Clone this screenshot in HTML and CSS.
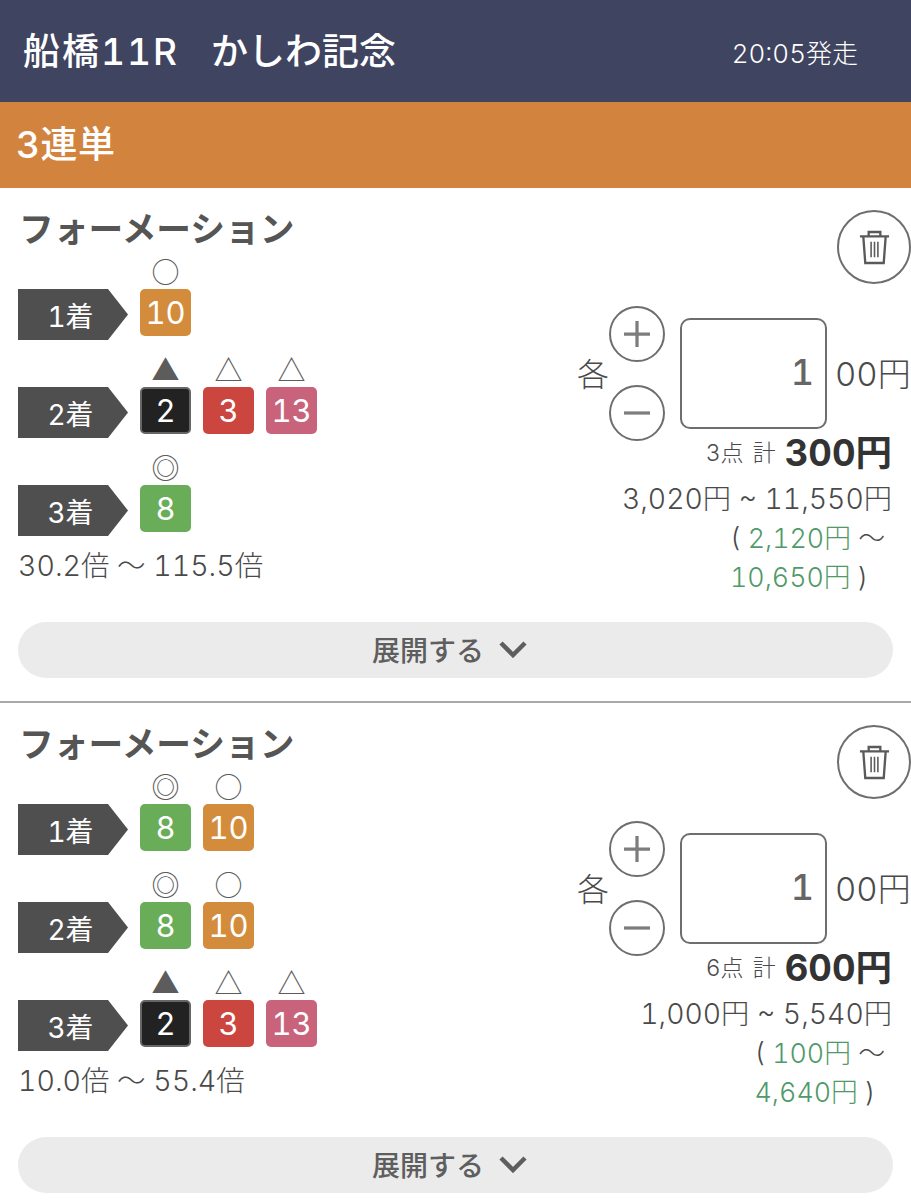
FILE: index.html
```html
<!DOCTYPE html>
<html lang="ja">
<head>
    <meta charset="UTF-8">
    <meta name="viewport" content="width=device-width, initial-scale=1.0">
    <title>船橋11R かしわ記念</title>
    <link rel="stylesheet" href="styles.css">
</head>
<body>
    <!-- Race header -->
    <header class="race-bar">
        <h1 class="race-name"><span class="race-no">船橋11R</span><span>かしわ記念</span></h1>
        <div class="race-time">20:05発走</div>
    </header>
    <div class="bet-type">3連単</div>

    <!-- First bet -->
    <section class="bet-card">
        <div class="bet-body">
            <div class="formation">
                <h2 class="formation-title">フォーメーション</h2>
                <div class="place-row">
                    <div class="place-label">1着</div>
                    <div class="pick"><span class="mark">○</span><span class="tile tile-orange">10</span></div>
                </div>
                <div class="place-row">
                    <div class="place-label">2着</div>
                    <div class="pick"><span class="mark">▲</span><span class="tile tile-black">2</span></div>
                    <div class="pick"><span class="mark">△</span><span class="tile tile-red">3</span></div>
                    <div class="pick"><span class="mark">△</span><span class="tile tile-pink">13</span></div>
                </div>
                <div class="place-row">
                    <div class="place-label">3着</div>
                    <div class="pick"><span class="mark">◎</span><span class="tile tile-green">8</span></div>
                </div>
                <p class="odds">30.2倍 ～ 115.5倍</p>
            </div>
            <div class="stake">
                <button class="trash-btn" type="button">
                    <svg viewBox="0 0 34 36" fill="none" stroke="currentColor" stroke-width="2.4">
                        <path d="M2 6.5h30M11 6V2h12v4M5.5 7l2 27h19l2-27"/>
                        <path d="M13.5 12v16M17 12v16M20.5 12v16" stroke-width="1.6"/>
                    </svg>
                </button>
                <div class="stepper">
                    <span class="each">各</span>
                    <div class="step-btns">
                        <button class="step-btn" type="button"><svg viewBox="0 0 56 56"><path d="M14 28h28M28 14v28"/></svg></button>
                        <button class="step-btn" type="button"><svg viewBox="0 0 56 56"><path d="M14 28h28"/></svg></button>
                    </div>
                    <input class="amount" type="text" value="1">
                    <span class="unit">00円</span>
                </div>
                <div class="total"><span class="total-label">3点 計</span> <strong>300円</strong></div>
                <div class="payout">3,020円 ~ 11,550円</div>
                <div class="profit">( <em>2,120円</em> ～<br><em>10,650円</em> )</div>
            </div>
        </div>
        <button class="expand-btn" type="button">展開する
            <svg viewBox="0 0 28 18" fill="none" stroke="currentColor" stroke-width="4.5"><path d="M2 3l12 12L26 3"/></svg>
        </button>
    </section>

    <!-- Second bet -->
    <section class="bet-card">
        <div class="bet-body">
            <div class="formation">
                <h2 class="formation-title">フォーメーション</h2>
                <div class="place-row">
                    <div class="place-label">1着</div>
                    <div class="pick"><span class="mark">◎</span><span class="tile tile-green">8</span></div>
                    <div class="pick"><span class="mark">○</span><span class="tile tile-orange">10</span></div>
                </div>
                <div class="place-row">
                    <div class="place-label">2着</div>
                    <div class="pick"><span class="mark">◎</span><span class="tile tile-green">8</span></div>
                    <div class="pick"><span class="mark">○</span><span class="tile tile-orange">10</span></div>
                </div>
                <div class="place-row">
                    <div class="place-label">3着</div>
                    <div class="pick"><span class="mark">▲</span><span class="tile tile-black">2</span></div>
                    <div class="pick"><span class="mark">△</span><span class="tile tile-red">3</span></div>
                    <div class="pick"><span class="mark">△</span><span class="tile tile-pink">13</span></div>
                </div>
                <p class="odds">10.0倍 ～ 55.4倍</p>
            </div>
            <div class="stake">
                <button class="trash-btn" type="button">
                    <svg viewBox="0 0 34 36" fill="none" stroke="currentColor" stroke-width="2.4">
                        <path d="M2 6.5h30M11 6V2h12v4M5.5 7l2 27h19l2-27"/>
                        <path d="M13.5 12v16M17 12v16M20.5 12v16" stroke-width="1.6"/>
                    </svg>
                </button>
                <div class="stepper">
                    <span class="each">各</span>
                    <div class="step-btns">
                        <button class="step-btn" type="button"><svg viewBox="0 0 56 56"><path d="M14 28h28M28 14v28"/></svg></button>
                        <button class="step-btn" type="button"><svg viewBox="0 0 56 56"><path d="M14 28h28"/></svg></button>
                    </div>
                    <input class="amount" type="text" value="1">
                    <span class="unit">00円</span>
                </div>
                <div class="total"><span class="total-label">6点 計</span> <strong>600円</strong></div>
                <div class="payout">1,000円 ~ 5,540円</div>
                <div class="profit">( <em>100円</em> ～<br><em>4,640円</em> )</div>
            </div>
        </div>
        <button class="expand-btn" type="button">展開する
            <svg viewBox="0 0 28 18" fill="none" stroke="currentColor" stroke-width="4.5"><path d="M2 3l12 12L26 3"/></svg>
        </button>
    </section>
</body>
</html>
```

FILE: styles.css
```css
:root {
    --navy: #3f4460;
    --orange: #d2843f;
    --text-color: #4a4a4a;
    --line-color: #6e6e6e;
    --green-text: #4f9a68;
}

* {
    margin: 0;
    padding: 0;
    box-sizing: border-box;
}

body {
    font-family: "Inter", "Noto Sans CJK JP", sans-serif;
    font-variant-numeric: tabular-nums;
    color: var(--text-color);
    background-color: #fff;
    overflow-x: hidden;
}

button {
    font-family: inherit;
    background: none;
    border: none;
    color: inherit;
}

.race-bar {
    height: 102px;
    display: flex;
    justify-content: space-between;
    align-items: center;
    padding: 0 53px 0 23px;
    background-color: var(--navy);
    color: #fff;
}

.race-name {
    display: flex;
    gap: 32px;
    font-size: 37px;
    font-weight: 500;
    line-height: 1;
}

.race-no {
    letter-spacing: 2px;
}

.race-time {
    font-size: 26px;
    font-weight: 300;
}

.bet-type {
    height: 86px;
    display: flex;
    align-items: center;
    padding: 0 0 6px 16px;
    background-color: var(--orange);
    color: #fff;
    font-size: 37px;
    font-weight: 500;
    letter-spacing: 0.5px;
}

.bet-card {
    height: 515px;
    padding-bottom: 23px;
    border-bottom: 2px solid #a9a9a9;
    display: flex;
    flex-direction: column;
}

.bet-body {
    flex-grow: 1;
    display: flex;
    justify-content: space-between;
}

.formation {
    padding: 21px 0 0 18px;
}

.formation-title {
    font-size: 34.7px;
    font-weight: 700;
    line-height: 40px;
    margin: 0 0 9px 1px;
    color: #555;
}

.place-row {
    display: flex;
    gap: 12px;
    margin-bottom: 16px;
}

.place-row:last-of-type {
    margin-bottom: 0;
}

.place-label {
    width: 110px;
    height: 51px;
    margin-top: 31px;
    display: flex;
    justify-content: center;
    align-items: center;
    padding-right: 5px;
    background-color: #4f4f4f;
    color: #fff;
    font-size: 28px;
    clip-path: polygon(0 0, 90px 0, 100% 50%, 90px 100%, 0 100%);
}

.pick {
    width: 51px;
    display: flex;
    flex-direction: column;
    align-items: center;
}

.mark {
    height: 31px;
    line-height: 27px;
    font-size: 28px;
    font-family: "Noto Sans CJK JP", sans-serif;
    color: #5c5c5c;
}

.tile {
    width: 51px;
    height: 47px;
    display: flex;
    justify-content: center;
    align-items: center;
    border-radius: 5px;
    color: #fff;
    font-size: 31px;
    line-height: 1;
}

.tile-orange { background-color: #d38c3b; }
.tile-red { background-color: #cc4640; }
.tile-pink { background-color: #c9637c; }
.tile-green { background-color: #69ad58; }
.tile-black { background-color: #222; border: 2px solid #666; }

.odds {
    margin-top: 10px;
    font-size: 28.5px;
    line-height: 40px;
    font-weight: 300;
}

.stake {
    display: flex;
    flex-direction: column;
    align-items: flex-end;
    padding-top: 22px;
}

.trash-btn {
    width: 74px;
    height: 74px;
    display: flex;
    justify-content: center;
    align-items: center;
    border: 2px solid var(--line-color);
    border-radius: 50%;
    color: #5a5a5a;
}

.trash-btn svg {
    width: 33px;
    height: 35px;
}

.stepper {
    display: flex;
    align-items: center;
    margin-top: 22px;
}

.each {
    width: 32px;
    padding-bottom: 4px;
    font-size: 32px;
    font-weight: 300;
}

.step-btns {
    display: flex;
    flex-direction: column;
    gap: 23px;
    margin-right: 15px;
}

.step-btn {
    width: 56px;
    height: 56px;
    border: 2px solid var(--line-color);
    border-radius: 50%;
}

.step-btn svg {
    display: block;
    width: 52px;
    height: 52px;
    fill: none;
    stroke: #7d7d7d;
    stroke-width: 3.5;
}

.amount {
    width: 147px;
    height: 111px;
    padding: 0 11px 4px 0;
    border: 2px solid var(--line-color);
    border-radius: 10px;
    text-align: right;
    font-family: inherit;
    font-variant-numeric: tabular-nums;
    font-size: 36px;
    font-weight: 500;
    color: #666;
    outline: none;
}

.unit {
    width: 84px;
    padding: 0 0 4px 8px;
    font-size: 33px;
    font-weight: 300;
    white-space: nowrap;
}

.total {
    display: flex;
    align-items: center;
    gap: 9px;
    height: 36px;
    margin: -6px 19px 0 0;
    line-height: 1;
}

.total-label {
    font-size: 23px;
    font-weight: 300;
    word-spacing: 3px;
}

.total strong {
    font-size: 36.5px;
    font-weight: 700;
    color: #333;
}

.payout {
    margin: 8px 19px 0 0;
    font-size: 28.3px;
    line-height: 40px;
    font-weight: 300;
}

.profit {
    margin-right: 26px;
    font-size: 26.8px;
    line-height: 39px;
    font-weight: 300;
}

.profit em {
    font-style: normal;
    color: var(--green-text);
}

.expand-btn {
    flex-shrink: 0;
    width: 875px;
    height: 56px;
    margin-left: 18px;
    padding: 0 12px 2px 0;
    display: flex;
    justify-content: center;
    align-items: center;
    gap: 15px;
    border-radius: 28px;
    background-color: #ebebeb;
    color: #5e5e5e;
    font-size: 28px;
    font-weight: 500;
}

.expand-btn svg {
    width: 28px;
    height: 18px;
}
```
